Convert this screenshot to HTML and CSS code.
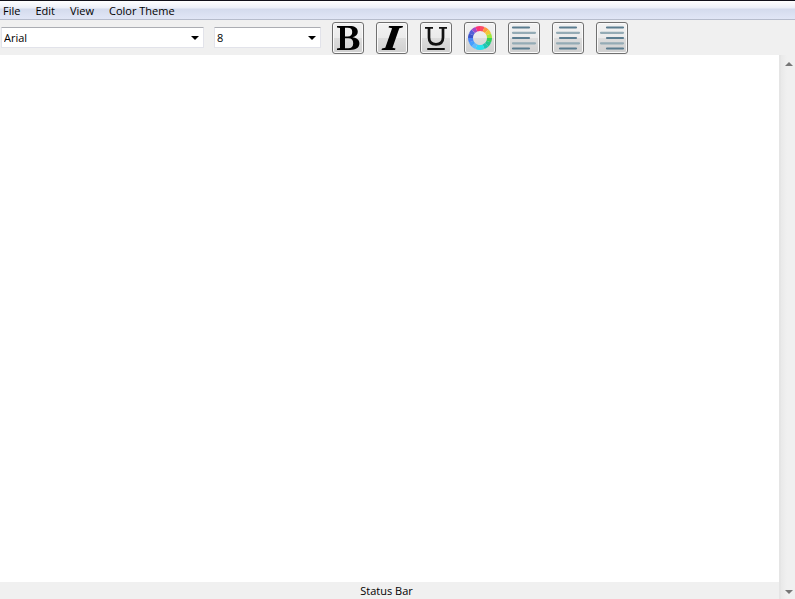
FILE: index.html
```html
<!DOCTYPE html>
<html lang="en">
<head>
<meta charset="utf-8">
<title>Text Editor</title>
<link rel="stylesheet" href="styles.css">
</head>
<body>
<nav class="menubar">
  <button class="menu" type="button">File</button>
  <button class="menu" type="button">Edit</button>
  <button class="menu" type="button">View</button>
  <button class="menu" type="button">Color Theme</button>
</nav>
<div class="toolbar">
  <div class="combo combo-font">
    <select aria-label="Font family"><option>Arial</option></select>
    <svg class="arrow" viewBox="0 0 8 4"><path d="M0 0h8L4 4z"/></svg>
  </div>
  <div class="combo combo-size">
    <select aria-label="Font size"><option>8</option></select>
    <svg class="arrow" viewBox="0 0 8 4"><path d="M0 0h8L4 4z"/></svg>
  </div>
  <div class="tools">
    <button class="tool" type="button" aria-label="Bold">
      <svg viewBox="0 0 30 30"><path fill-rule="evenodd" d="M4 3h12.500c5.300 0 8.300 2 8.300 5.800 0 3-2 4.700-5.300 5.400 4.300.5 6.900 2.600 6.900 6.100 0 4.600-3.700 6.700-9.400 6.700H4v-1.400l3-.6V5l-3-.6zM12 4.800v8.700h2.700c3 0 4.500-1.400 4.500-4.400s-1.500-4.300-4.500-4.300zM12 15.300v9.900h3.200c3.400 0 5-1.700 5-5s-1.600-4.900-5-4.900z"/></svg>
    </button>
    <button class="tool" type="button" aria-label="Italic">
      <svg viewBox="0 0 30 30"><path d="M12 3h14l-.4 1.500-3.300.7-6.800 19.600 3 .7-.5 1.500H4.500l.5-1.500 3.300-.7 6.800-19.600-3.500-.7z"/></svg>
    </button>
    <button class="tool" type="button" aria-label="Underline">
      <svg viewBox="0 0 30 30" fill="none" stroke="#111"><path stroke-width="1.700" d="M4 4.800h8M18 4.800h8"/><path stroke-width="2.700" d="M8 5v9.500c0 4.500 2.400 6.800 7 6.800s7-2.300 7-6.800V5"/><path stroke-width="2" stroke-linecap="round" d="M7 26h16"/></svg>
    </button>
    <button class="tool" type="button" aria-label="Text color">
      <svg class="wheel" viewBox="0 0 30 30" fill="none" stroke-width="5">
        <circle cx="15" cy="15" r="9.500" pathLength="16" stroke="#36d058" stroke-dasharray="1 15"/>
        <circle cx="15" cy="15" r="9.500" pathLength="16" stroke="#22c78d" stroke-dasharray="1 15" stroke-dashoffset="-1"/>
        <circle cx="15" cy="15" r="9.500" pathLength="16" stroke="#20c4b4" stroke-dasharray="1 15" stroke-dashoffset="-2"/>
        <circle cx="15" cy="15" r="9.500" pathLength="16" stroke="#25e5e8" stroke-dasharray="1 15" stroke-dashoffset="-3"/>
        <circle cx="15" cy="15" r="9.500" pathLength="16" stroke="#35d4fb" stroke-dasharray="1 15" stroke-dashoffset="-4"/>
        <circle cx="15" cy="15" r="9.500" pathLength="16" stroke="#5dbcff" stroke-dasharray="1 15" stroke-dashoffset="-5"/>
        <circle cx="15" cy="15" r="9.500" pathLength="16" stroke="#469fff" stroke-dasharray="1 15" stroke-dashoffset="-6"/>
        <circle cx="15" cy="15" r="9.500" pathLength="16" stroke="#4b87f8" stroke-dasharray="1 15" stroke-dashoffset="-7"/>
        <circle cx="15" cy="15" r="9.500" pathLength="16" stroke="#3d55cb" stroke-dasharray="1 15" stroke-dashoffset="-8"/>
        <circle cx="15" cy="15" r="9.500" pathLength="16" stroke="#5560d8" stroke-dasharray="1 15" stroke-dashoffset="-9"/>
        <circle cx="15" cy="15" r="9.500" pathLength="16" stroke="#a04cc8" stroke-dasharray="1 15" stroke-dashoffset="-10"/>
        <circle cx="15" cy="15" r="9.500" pathLength="16" stroke="#fb3576" stroke-dasharray="1 15" stroke-dashoffset="-11"/>
        <circle cx="15" cy="15" r="9.500" pathLength="16" stroke="#fb4d66" stroke-dasharray="1 15" stroke-dashoffset="-12"/>
        <circle cx="15" cy="15" r="9.500" pathLength="16" stroke="#ff983c" stroke-dasharray="1 15" stroke-dashoffset="-13"/>
        <circle cx="15" cy="15" r="9.500" pathLength="16" stroke="#f2c934" stroke-dasharray="1 15" stroke-dashoffset="-14"/>
        <circle cx="15" cy="15" r="9.500" pathLength="16" stroke="#a2e83c" stroke-dasharray="1 15" stroke-dashoffset="-15"/>
      </svg>
    </button>
    <button class="tool" type="button" aria-label="Align left">
      <svg class="lines" viewBox="0 0 30 30"><path class="dark" d="M4 4.500h16M4 15h16M4 25.500h16"/><path class="light" d="M4 9.800h22M4 20.300h22"/></svg>
    </button>
    <button class="tool" type="button" aria-label="Align center">
      <svg class="lines" viewBox="0 0 30 30"><path class="dark" d="M7 4.500h16M7 15h16M7 25.500h16"/><path class="light" d="M4 9.800h22M4 20.300h22"/></svg>
    </button>
    <button class="tool" type="button" aria-label="Align right">
      <svg class="lines" viewBox="0 0 30 30"><path class="dark" d="M10 4.500h16M10 15h16M10 25.500h16"/><path class="light" d="M4 9.800h22M4 20.300h22"/></svg>
    </button>
  </div>
</div>
<main class="workspace">
  <div class="document">
    <textarea class="editor" aria-label="Document text"></textarea>
    <footer class="status">Status Bar</footer>
  </div>
  <div class="scrollbar">
    <button class="scroll" type="button" aria-label="Scroll up"><svg viewBox="0 0 8 4"><path d="M4 0l4 4H0z"/></svg></button>
    <button class="scroll" type="button" aria-label="Scroll down"><svg viewBox="0 0 8 4"><path d="M0 0h8L4 4z"/></svg></button>
  </div>
</main>
</body>
</html>
```
FILE: styles.css
```css
* { box-sizing: border-box; }

body {
  margin: 0;
  height: 100vh;
  display: flex;
  flex-direction: column;
  background: #f0f0f0;
  color: #000;
  font: 11px/16px "Open Sans", "Noto Sans", sans-serif;
}

button, select, textarea { font: inherit; color: inherit; }

.menubar {
  display: flex;
  gap: 15px;
  height: 20px;
  padding: 1px 3px 0;
  border-top: 1px solid #10101a;
  border-bottom: 1px solid #b6bccc;
  background: linear-gradient(#fff 0, #eceff8 7px, #d4dbed 8px, #e1e6f6 100%);
}

.menu {
  padding: 0;
  border: 0;
  background: none;
}

.toolbar {
  display: flex;
  align-items: center;
  height: 35px;
  padding-left: 1px;
}

.combo {
  position: relative;
  height: 21px;
}

.combo-font { width: 203px; }
.combo-size { width: 107px; margin-left: 10px; }

.combo select {
  appearance: none;
  display: block;
  width: 100%;
  height: 100%;
  padding: 0 20px 0 2px;
  border: 1px solid #e2e3ea;
  border-top-color: #abadb3;
  border-radius: 1px;
  background: #fff;
}

.arrow {
  position: absolute;
  right: 5px;
  top: 9px;
  width: 8px;
  height: 4px;
  pointer-events: none;
}

.tools {
  display: flex;
  gap: 12px;
  margin-left: 11px;
}

.tool {
  width: 32px;
  height: 32px;
  padding: 0;
  border: 1px solid #707070;
  border-radius: 3px;
  background: linear-gradient(#f2f2f2 0, #ebebeb 50%, #dddddd 50%, #cfcfcf 100%);
  box-shadow: inset 0 0 0 1px #fafafa;
}

.tool svg { display: block; width: 30px; height: 30px; }

.lines { fill: none; stroke-width: 2.2; stroke-linecap: round; }
.lines .dark { stroke: #5b7d90; }
.lines .light { stroke: #94abb5; }

.workspace {
  flex: 1;
  display: flex;
  min-height: 0;
}

.document {
  flex: 1;
  display: flex;
  flex-direction: column;
}

.editor {
  flex: 1;
  padding: 2px;
  border: 0;
  outline: 0;
  resize: none;
  background: #fff;
}

.status {
  padding: 1px 6px 0 0;
  text-align: center;
}

.scrollbar {
  display: flex;
  flex-direction: column;
  justify-content: space-between;
  width: 16px;
  border-left: 2px solid #e5e5e5;
  background: linear-gradient(90deg, #e9e9e9, #f0f0f0 6px);
}

.scroll {
  display: grid;
  place-items: center;
  height: 16px;
  padding: 2px 0 0 2px;
  border: 0;
  background: none;
}

.scroll svg { width: 8px; height: 4px; fill: #777; }
```
